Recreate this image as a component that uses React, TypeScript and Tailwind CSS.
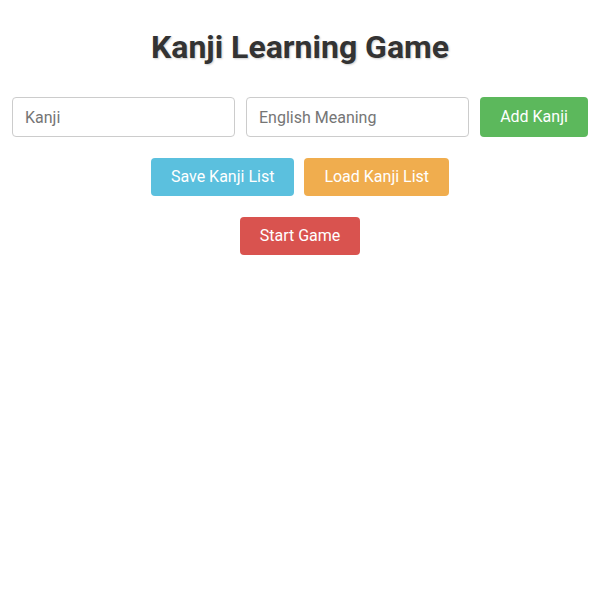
import { useState } from "react";

export default function App() {
  const [kanji, setKanji] = useState("");
  const [meaning, setMeaning] = useState("");

  return (
    <div className="min-h-screen bg-white px-3 pt-[23px] font-['Roboto',sans-serif] text-[#333]">
      <h1 className="text-center text-[32px] font-bold leading-[48px] [text-shadow:1px_1px_2px_rgba(0,0,0,0.2)]">
        Kanji Learning Game
      </h1>

      <div className="mt-[26px] flex gap-[11px]">
        <input
          value={kanji}
          onChange={(e) => setKanji(e.target.value)}
          placeholder="Kanji"
          className="h-10 min-w-0 flex-1 rounded border border-[#ccc] px-3 text-base outline-none placeholder:text-[#757575]"
        />
        <input
          value={meaning}
          onChange={(e) => setMeaning(e.target.value)}
          placeholder="English Meaning"
          className="h-10 min-w-0 flex-1 rounded border border-[#ccc] px-3 text-base outline-none placeholder:text-[#757575]"
        />
        <button className="h-10 w-[108px] rounded bg-[#5cb85c] text-base text-white">
          Add Kanji
        </button>
      </div>

      <div className="mt-[21px] flex justify-center gap-[10px]">
        <button className="h-[38px] rounded bg-[#5bc0de] px-5 text-base text-white">
          Save Kanji List
        </button>
        <button className="h-[38px] rounded bg-[#f0ad4e] px-5 text-base text-white">
          Load Kanji List
        </button>
      </div>

      <div className="mt-[21px] flex justify-center">
        <button className="h-[38px] rounded bg-[#d9534f] px-5 text-base text-white">
          Start Game
        </button>
      </div>
    </div>
  );
}
